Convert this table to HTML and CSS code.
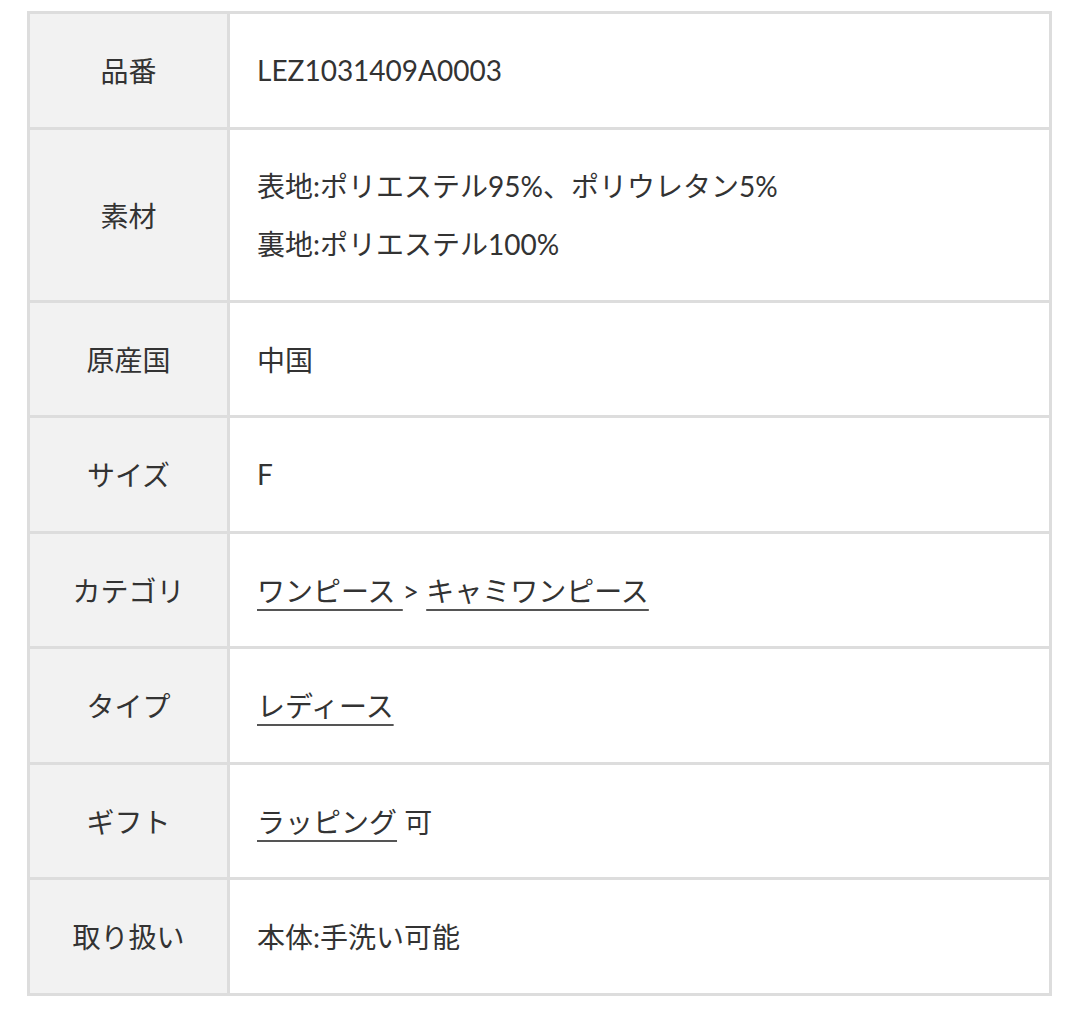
FILE: index.html
```html
<!DOCTYPE html>
<html lang="ja">
<head>
<meta charset="utf-8">
<link rel="stylesheet" href="styles.css">
</head>
<body>
<div class="wrap">
<table class="spec">
<tr><th>品番</th><td>LEZ1031409A0003</td></tr>
<tr class="tall"><th>素材</th><td><p>表地:ポリエステル95%、ポリウレタン5%</p><p>裏地:ポリエステル100%</p></td></tr>
<tr><th>原産国</th><td>中国</td></tr>
<tr><th>サイズ</th><td>F</td></tr>
<tr><th>カテゴリ</th><td><a href="#">ワンピース </a> &gt; <a href="#">キャミワンピース </a></td></tr>
<tr><th>タイプ</th><td><a href="#">レディース </a></td></tr>
<tr><th>ギフト</th><td><a href="#">ラッピング</a> 可</td></tr>
<tr><th>取り扱い</th><td>本体:手洗い可能</td></tr>
</table>
</div>
</body>
</html>
```
FILE: styles.css
```css
html, body { margin: 0; padding: 0; background: #fff; }
body { font-family: Lato, "Noto Sans CJK JP", sans-serif; color: #333; }
.wrap { padding: 11px 28px 0 27px; }
.spec { width: 100%; border-collapse: collapse; border: 3px solid #ddd; font-size: 28px; }
.spec tr { height: 115.5px; }
.spec tr.tall { height: 173px; }
.spec th, .spec td { border: 3px solid #ddd; vertical-align: middle; }
.spec th { width: 197px; background: #f2f2f2; font-weight: normal; text-align: center; padding: 0; }
.spec td { padding: 0 27px; text-align: left; }
.spec p { margin: 0; line-height: 58px; }
.spec a { color: #333; text-decoration: underline; text-decoration-color: #555; text-underline-offset: 7px; text-decoration-thickness: 2px; }
```
